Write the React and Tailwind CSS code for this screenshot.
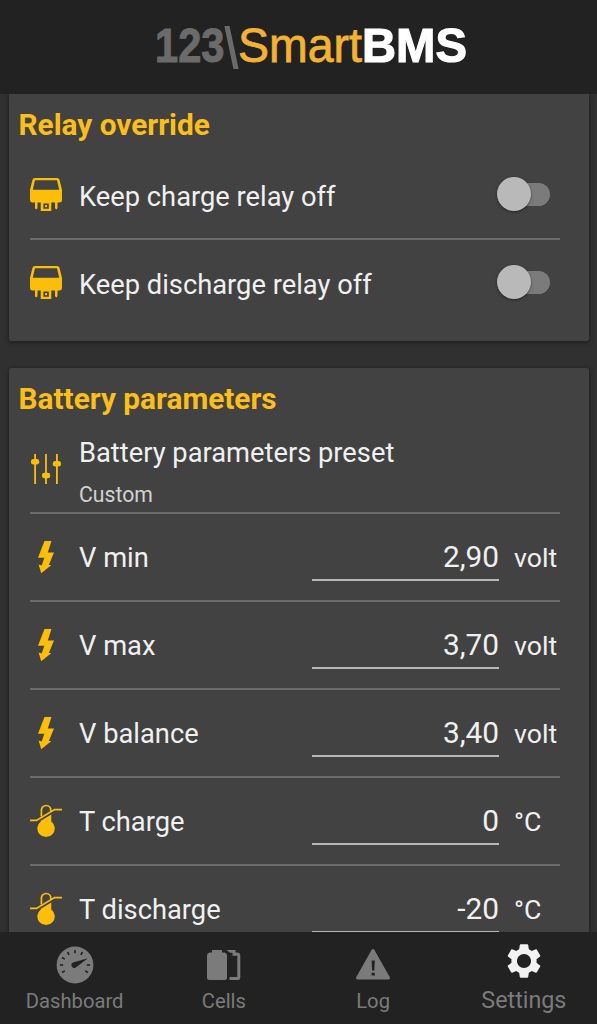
import React, { useState } from 'react';

const initialParameters = [
  { id: 'vmin', label: 'V min', value: '2,90', unit: 'volt', icon: 'bolt' },
  { id: 'vmax', label: 'V max', value: '3,70', unit: 'volt', icon: 'bolt' },
  { id: 'vbalance', label: 'V balance', value: '3,40', unit: 'volt', icon: 'bolt' },
  { id: 'tcharge', label: 'T charge', value: '0', unit: '°C', icon: 'temp' },
  { id: 'tdischarge', label: 'T discharge', value: '-20', unit: '°C', icon: 'temp' },
];

const Logo = () => (
  <svg width="320" height="76" viewBox="0 -10 320 76" fontFamily="'Liberation Sans', Arial, sans-serif" fontSize="49">
    <text x="3" y="44" textLength="69.5" lengthAdjust="spacingAndGlyphs" fontWeight="bold" fill="#6b6b6b" stroke="#6b6b6b" strokeWidth="1">123</text>
    <text x="73.5" y="49" fontSize="56" textLength="12" lengthAdjust="spacingAndGlyphs" fill="#6b6b6b" stroke="#6b6b6b" strokeWidth="2.2">\</text>
    <text x="86" y="44" textLength="124" lengthAdjust="spacingAndGlyphs" fill="#f2b233" stroke="#f2b233" strokeWidth="0.8">Smart</text>
    <text x="210" y="44" textLength="105" lengthAdjust="spacingAndGlyphs" fontWeight="bold" fill="#ffffff" stroke="#ffffff" strokeWidth="1.2">BMS</text>
  </svg>
);

const RelayIcon = () => (
  <svg width="32" height="34" viewBox="0 0 32 34" fill="#fcbe08">
    <path
      fillRule="evenodd"
      d="M5 0H27Q29 0 29.6 2L32 12V21.5Q32 24.5 29.5 24.5H27.5V29.8Q27.5 31.2 26.3 31.2T25 29.8V24.5H21.3V33H10.7V24.5H7.5V29.8Q7.5 31.2 6.2 31.2T5 29.8V24.5H2.5Q0 24.5 0 21.5V12L2.4 2Q3 0 5 0ZM5 2.3L2.8 11.7H29.2L27 2.3ZM13.4 25.5V30.8H18.8V25.5Z"
    />
    <rect x="15.1" y="27" width="2" height="2.2" />
  </svg>
);

const SlidersIcon = () => (
  <svg width="32" height="30" viewBox="0 0 32 30" fill="#fcbe08">
    <rect x="4.2" width="1.8" height="30" />
    <rect x="15.1" width="1.8" height="30" />
    <rect x="26" width="1.8" height="30" />
    <rect x="1" y="5" width="8.2" height="5.6" rx="2.4" />
    <rect x="12" y="18.7" width="8.2" height="5.6" rx="2.4" />
    <rect x="22.8" y="7" width="8.2" height="5.6" rx="2.4" />
  </svg>
);

const BoltIcon = () => (
  <svg width="32" height="34" viewBox="0 0 32 34" fill="#fcbe08">
    <path d="M14.5 1H21.5L17.8 12.6H24L18.8 25H21.5L11.2 33.2L8.6 24.4L11.8 25.4L14.3 17.8H8Z" />
  </svg>
);

const TempIcon = () => (
  <svg width="32" height="34" viewBox="0 0 32 34" fill="none" stroke="#fcbe08" strokeWidth="1.7">
    <path d="M0 16.4H6.5L24.5 5.6H32" />
    <path d="M11.4 12.5V6.2A4.7 4.7 0 0 1 20.8 6.2V7" />
    <path d="M10.8 16.8L21.3 10.4V17.4A8.7 8.7 0 1 1 10.8 17.4Z" fill="#fcbe08" stroke="none" />
  </svg>
);

const ticks = [-120, -90, -60, -30, 0, 30, 90, 120];

const DashboardIcon = () => (
  <svg width="38" height="38" viewBox="0 0 38 38">
    <circle cx="19" cy="19" r="18.4" fill="#7b7b7b" />
    {ticks.map((angle) => (
      <path key={angle} d="M19 4V7.2" stroke="#222222" strokeWidth="1.6" transform={`rotate(${angle} 19 19)`} />
    ))}
    <path d="M31.8 12.2L20.2 21.2A2.9 2.9 0 1 1 17.8 16.2Z" fill="#222222" />
  </svg>
);

const CellsIcon = () => (
  <svg width="36" height="38" viewBox="0 0 36 38" fill="#7b7b7b">
    <path d="M6 4H16V6.5H18.5Q21 7 21 9.5V31.5Q21 34 18.5 34H3.5Q1 34 1 31.5V9.5Q1 7 3.5 6.5H6Z" />
    <path d="M20.5 4H29.5V6.5H32Q34.3 7 34.3 9.5V31.5Q34.3 34 32 34H23.5V31H31.3V9.7H26.5V6.8H24Z" />
  </svg>
);

const LogIcon = () => (
  <svg width="36" height="38" viewBox="0 0 36 38">
    <path d="M18 4.5L33.5 32H2.5Z" fill="#7b7b7b" stroke="#7b7b7b" strokeWidth="3" strokeLinejoin="round" />
    <path d="M16.6 14.5H19.8L19.3 24.5H17.1ZM16.6 26.8H19.8V29.4H16.6Z" fill="#222222" />
  </svg>
);

const SettingsIcon = () => (
  <svg width="42" height="42" viewBox="0 0 24 24" fill="#f2f2f2">
    <path d="M19.14 12.94c.04-.3.06-.61.06-.94 0-.32-.02-.64-.07-.94l2.03-1.58c.18-.14.23-.41.12-.61l-1.92-3.32c-.12-.22-.37-.29-.59-.22l-2.39.96c-.5-.38-1.03-.7-1.62-.94l-.36-2.54c-.04-.24-.24-.41-.48-.41h-3.84c-.24 0-.43.17-.47.41l-.36 2.54c-.59.24-1.13.57-1.62.94l-2.39-.96c-.22-.08-.47 0-.59.22L2.74 8.87c-.12.21-.08.47.12.61l2.03 1.58c-.05.3-.09.63-.09.94s.02.64.07.94l-2.03 1.58c-.18.14-.23.41-.12.61l1.92 3.32c.12.22.37.29.59.22l2.39-.96c.5.38 1.03.7 1.62.94l.36 2.54c.05.24.24.41.48.41h3.84c.24 0 .44-.17.47-.41l.36-2.54c.59-.24 1.13-.56 1.62-.94l2.39.96c.22.08.47 0 .59-.22l1.92-3.32c.12-.22.07-.47-.12-.61l-2.01-1.58zM12 16c-2.2 0-4-1.8-4-4s1.8-4 4-4 4 1.8 4 4-1.8 4-4 4z" />
  </svg>
);

const Switch = ({ checked, onChange, label }) => (
  <button
    role="switch"
    aria-checked={checked}
    aria-label={label}
    onClick={() => onChange(!checked)}
    className="mr-[10px] mb-[2px] flex h-[34px] w-[53px] items-center"
  >
    <span className="ml-[5px] flex h-[23px] w-12 items-center rounded-full bg-[#7b7b7b]">
      <span
        className={`-ml-[5px] h-[34px] w-[34px] shrink-0 rounded-full shadow-[0_1px_3px_rgba(0,0,0,0.45)] ${
          checked ? 'translate-x-5 bg-[#fcbe08]' : 'bg-[#b9b9b9]'
        }`}
      />
    </span>
  </button>
);

const RelayRow = ({ label, divider }) => {
  const [off, setOff] = useState(false);

  return (
    <div className={`mr-[29px] ml-[21px] flex h-[88px] items-center border-b-2 ${divider ? 'border-[#6a6a6a]' : 'border-transparent'}`}>
      <RelayIcon />
      <span className="ml-[17px] flex-1 pt-1 text-[27.3px]">{label}</span>
      <Switch checked={off} onChange={setOff} label={label} />
    </div>
  );
};

const ParameterRow = ({ parameter, onChange }) => (
  <div className="mr-[29px] ml-[21px] flex h-[88px] items-center border-b-2 border-[#6a6a6a]">
    {parameter.icon === 'bolt' ? <BoltIcon /> : <TempIcon />}
    <span className="ml-[17px] flex-1 pt-[3px] text-[27.3px]">{parameter.label}</span>
    <input
      value={parameter.value}
      onChange={(e) => onChange(parameter.id, e.target.value)}
      className="mt-[2px] h-[46px] w-[187px] border-b-2 border-[#b4b8b8] bg-transparent pb-px text-right text-[29.8px] outline-none"
    />
    <span className="ml-[15px] w-[46px] pt-[2px] text-[26.7px]">{parameter.unit}</span>
  </div>
);

const tabs = [
  { label: 'Dashboard', Icon: DashboardIcon },
  { label: 'Cells', Icon: CellsIcon },
  { label: 'Log', Icon: LogIcon },
  { label: 'Settings', Icon: SettingsIcon },
];

const App = () => {
  const [parameters, setParameters] = useState(initialParameters);

  const handleChange = (id, value) => {
    setParameters((prev) => prev.map((p) => (p.id === id ? { ...p, value } : p)));
  };

  return (
    <div className="flex h-[1024px] w-[597px] flex-col overflow-hidden bg-[#303030] font-['Roboto',sans-serif] text-[#f0f0f0]">
      <header className="flex h-[94px] shrink-0 justify-center bg-[#222222] pt-2 pl-[27px]">
        <Logo />
      </header>

      <main className="min-h-0 flex-1 overflow-hidden pr-2 pl-[9px]">
        <section className="h-[247px] rounded-b-[3px] bg-[#424242] shadow-[0_1px_5px_rgba(0,0,0,0.5)]">
          <h2 className="h-[58px] pt-[13px] pl-[9.5px] text-[29.8px] leading-9 font-bold text-[#fcbe18]">Relay override</h2>
          <RelayRow label="Keep charge relay off" divider />
          <RelayRow label="Keep discharge relay off" />
        </section>

        <section className="mt-[27px] h-[600px] rounded-[3px] bg-[#424242] shadow-[0_1px_5px_rgba(0,0,0,0.5)]">
          <h2 className="h-[62px] pt-[13px] pl-[9.5px] text-[29.8px] leading-9 font-bold text-[#fcbe18]">Battery parameters</h2>
          <div className="mr-[29px] ml-[21px] flex h-[84px] border-b-2 border-[#6a6a6a]">
            <div className="pt-6">
              <SlidersIcon />
            </div>
            <div className="ml-[17px]">
              <p className="pt-[7px] text-[27.3px] leading-8">Battery parameters preset</p>
              <p className="pt-[12px] text-[21.2px] leading-7 text-[#d2d2d2]">Custom</p>
            </div>
          </div>
          {parameters.map((parameter) => (
            <ParameterRow key={parameter.id} parameter={parameter} onChange={handleChange} />
          ))}
        </section>
      </main>

      <nav className="grid h-[92px] shrink-0 grid-cols-4 bg-[#222222] text-[#7b7b7b]">
        {tabs.map(({ label, Icon }) => (
          <button key={label} className={`flex flex-col items-center ${label === 'Settings' ? 'pl-[3px]' : ''}`}>
            <span className={`flex h-[38px] items-center ${label === 'Settings' ? 'mt-[10px]' : 'mt-[14px]'}`}>
              <Icon />
            </span>
            <span className={label === 'Settings' ? 'mt-[4px] text-[23.3px] leading-8' : 'mt-px text-[20.2px] leading-8'}>
              {label}
            </span>
          </button>
        ))}
      </nav>
    </div>
  );
};

export default App;
